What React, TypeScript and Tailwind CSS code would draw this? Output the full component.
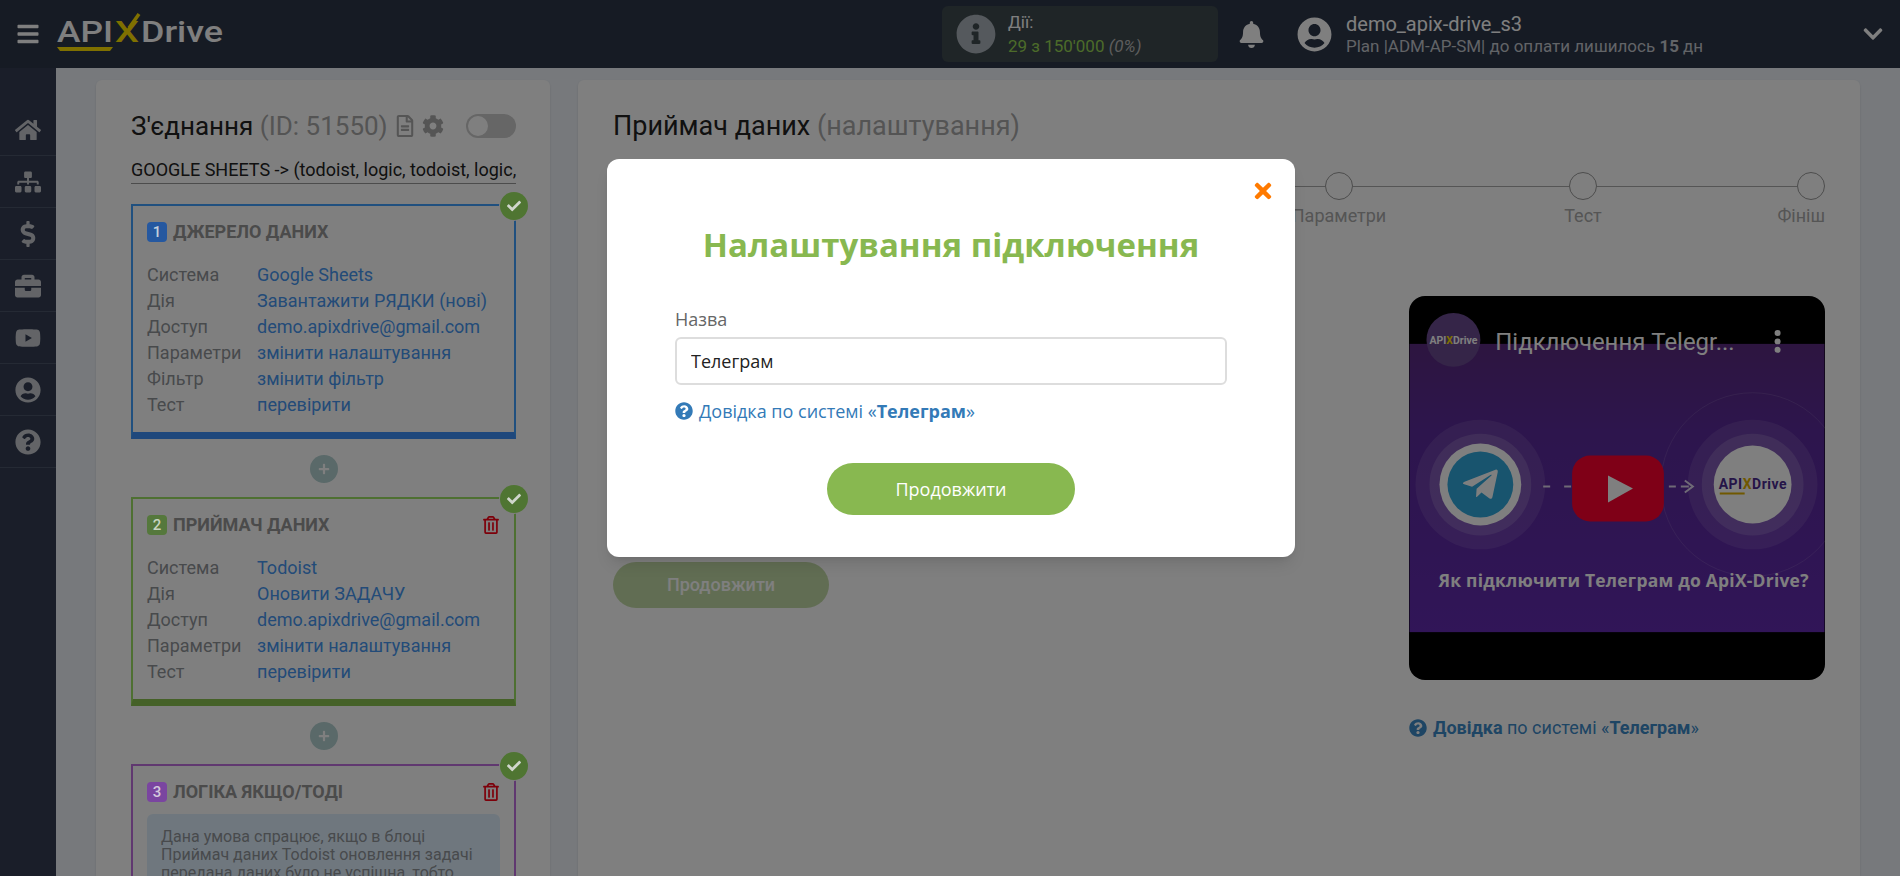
import React from "react";
import {
  FaBars, FaBell, FaBriefcase, FaCheck, FaChevronDown, FaCog, FaDollarSign, FaHome, FaInfoCircle,
  FaPlus, FaQuestionCircle, FaRegFileAlt, FaRegTrashAlt, FaSitemap, FaTelegramPlane, FaTimes, FaUserCircle, FaYoutube,
} from "react-icons/fa";

const roboto = { fontFamily: "Roboto, sans-serif" };
const openSans = { fontFamily: '"Open Sans", sans-serif' };

function Logo() {
  return (
    <svg width="172" height="46" viewBox="0 0 172 46" className="ml-4 shrink-0">
      <text x="1" y="31" fontFamily="Roboto, sans-serif" fontWeight="500" fontSize="29" fill="#fff" textLength="56" lengthAdjust="spacingAndGlyphs">API</text>
      <text x="59" y="31" fontFamily="Roboto, sans-serif" fontWeight="500" fontSize="29" fill="#ffe000" textLength="24" lengthAdjust="spacingAndGlyphs">X</text>
      <path d="M73 17 L83 3" stroke="#ffe000" strokeWidth="3.5" fill="none" />
      <text x="85" y="31" fontFamily="Roboto, sans-serif" fontWeight="500" fontSize="29" fill="#fff" textLength="82" lengthAdjust="spacingAndGlyphs">Drive</text>
      <path d="M1 36 H57 L54 40 H4 Z" fill="#ffe000" />
    </svg>
  );
}

function Header() {
  return (
    <header className="flex h-17 shrink-0 items-center bg-[#2c3648] text-white" style={roboto}>
      <div className="flex w-[942px] shrink-0 items-center">
        <FaBars className="ml-4 text-2xl text-white" />
        <Logo />
      </div>
      <div className="flex h-14 w-69 items-center rounded-md bg-[#3e4a4e] pl-3.5">
        <FaInfoCircle className="text-[40px] text-[#aab2ba]" />
        <div className="ml-3 text-[17px] leading-6">
          <div>Дії:</div>
          <div className="text-[#98d654]">
            29 з 150'000 <span className="italic text-[#bbbbbb]">(0%)</span>
          </div>
        </div>
      </div>
      <FaBell className="ml-5 text-[27px] text-white" />
      <FaUserCircle className="ml-8 text-[35px] text-white" />
      <div className="ml-3.5 flex-1">
        <div className="text-xl leading-6">demo_apix-drive_s3</div>
        <div className="text-[17px] leading-5 text-[#c4c8cf]">
          Plan |ADM-AP-SM| до оплати лишилось <b>15</b> дн
        </div>
      </div>
      <FaChevronDown className="mr-4 text-[22px]" />
    </header>
  );
}

function Sidebar() {
  const items = [FaHome, FaSitemap, FaDollarSign, FaBriefcase, FaYoutube, FaUserCircle, FaQuestionCircle];
  return (
    <aside className="w-14 shrink-0 bg-[#343d52] pt-9">
      {items.map((Icon, i) => (
        <div key={i} className="flex h-13 items-center justify-center border-b border-[#4a5468] text-[26px] text-[#c6c9cf]">
          <Icon />
        </div>
      ))}
    </aside>
  );
}

const colors = {
  blue: { border: "border-[#40a0ff]", bar: "border-b-[#3f90f8]", badge: "bg-[#2558a0] text-[#c4d0dc]" },
  green: { border: "border-[#9ce064]", bar: "border-b-[#8ac250]", badge: "bg-[#55783c] text-[#c8d4c0]" },
  purple: { border: "border-[#c070e0]", bar: "border-b-[#c070e0]", badge: "bg-[#7a45a0] text-[#d4c8dc]" },
};

function Card(props: {
  n: number;
  title: string;
  color: "blue" | "green" | "purple";
  trash?: boolean;
  rows?: [string, string][];
  children?: React.ReactNode;
}) {
  const c = colors[props.color];
  return (
    <div className={`relative border-2 border-b-[7px] ${c.border} ${c.bar} px-3.5 pb-3.5 pt-4`}>
      <div className="absolute -right-3.5 -top-3.5 z-10 flex h-7 w-7 items-center justify-center rounded-full bg-[#4f7532] text-sm text-[#d0d6cc] ring-1 ring-[#808080]">
        <FaCheck />
      </div>
      <div className="flex h-5 items-center justify-between">
        <div className="flex items-center">
          <span className={`relative z-10 flex h-5 w-5 items-center justify-center rounded-sm text-[15px] font-medium ${c.badge}`}>{props.n}</span>
          <span className="ml-1.5 text-lg font-bold uppercase text-[#969696]">{props.title}</span>
        </div>
        {props.trash && <FaRegTrashAlt className="text-lg text-[#fa0014]" />}
      </div>
      {props.rows && (
        <div className="mt-5 text-lg leading-6.5">
          {props.rows.map(([k, v]) => (
            <div key={k} className="flex">
              <span className="w-27.5 shrink-0 text-[#909499]">{k}</span>
              <span className="text-[#4696f0]">{v}</span>
            </div>
          ))}
        </div>
      )}
      {props.children}
    </div>
  );
}

function PlusButton() {
  return (
    <div className="mb-3.5 mt-4 flex justify-center">
      <div className="flex h-7 w-7 items-center justify-center rounded-full bg-[#b4d2d2] text-xs text-white">
        <FaPlus />
      </div>
    </div>
  );
}

function LeftPanel() {
  return (
    <section className="w-[454px] shrink-0 rounded-t-md bg-white pl-[35px] pr-8.5 pt-8 shadow-sm">
      <div className="flex h-7 items-center">
        <span className="text-[26px] text-[#222222]">
          З'єднання <span className="text-[#a8a8a8]">(ID: 51550)</span>
        </span>
        <FaRegFileAlt className="ml-1.5 text-[22px] text-[#aaaaaa]" />
        <FaCog className="ml-1.5 text-[22px] text-[#aaaaaa]" />
        <div className="ml-auto flex h-6 w-12.5 items-center rounded-full bg-[#cccccc] pl-0.5">
          <div className="h-5 w-5 rounded-full bg-white" />
        </div>
      </div>
      <div className="mt-4 h-7 whitespace-nowrap border-b border-[#999999] text-lg leading-7 text-[#222222]">
        GOOGLE SHEETS -&gt; (todoist, logic, todoist, logic,
      </div>
      <div className="mt-5">
        <Card
          n={1}
          title="Джерело даних"
          color="blue"
          rows={[
            ["Система", "Google Sheets"],
            ["Дія", "Завантажити РЯДКИ (нові)"],
            ["Доступ", "demo.apixdrive@gmail.com"],
            ["Параметри", "змінити налаштування"],
            ["Фільтр", "змінити фільтр"],
            ["Тест", "перевірити"],
          ]}
        />
        <PlusButton />
        <Card
          n={2}
          title="Приймач даних"
          color="green"
          trash
          rows={[
            ["Система", "Todoist"],
            ["Дія", "Оновити ЗАДАЧУ"],
            ["Доступ", "demo.apixdrive@gmail.com"],
            ["Параметри", "змінити налаштування"],
            ["Тест", "перевірити"],
          ]}
        />
        <PlusButton />
        <Card n={3} title="Логіка якщо/тоді" color="purple" trash>
          <div className="mt-3 rounded-md bg-[#deeffd] px-3.5 pb-3 pt-3.5 text-base leading-4.5 text-[#909499]">
            Дана умова спрацює, якщо в блоці
            <br />
            Приймач даних Todoist оновлення задачі
            <br />
            передана даних було не успішна, тобто
          </div>
        </Card>
      </div>
    </section>
  );
}

function Step(props: { label: string; end?: boolean }) {
  return (
    <div className={`flex w-7 flex-col ${props.end ? "items-end" : "items-center"}`}>
      <div className="h-7 w-7 rounded-full border border-[#999999] bg-white" />
      <span className="mt-1 whitespace-nowrap text-lg leading-6 text-[#aaaaaa]">{props.label}</span>
    </div>
  );
}

function Segment({ className }: { className: string }) {
  return <div className={`mt-3.5 h-px bg-[#aaaaaa] ${className}`} />;
}

function Thumbnail() {
  return (
    <svg viewBox="0 0 416 385" className="block h-96 w-104 overflow-hidden rounded-2xl bg-black">
      <defs>
        <linearGradient id="band" x1="0" y1="0" x2="0" y2="1">
          <stop offset="0" stopColor="#5a2a80" />
          <stop offset="0.3" stopColor="#5a2a9a" />
          <stop offset="1" stopColor="#622ab0" />
        </linearGradient>
      </defs>
      <rect x="0" y="48" width="416" height="289" fill="url(#band)" />
      <circle cx="344" cy="189" r="92" fill="none" stroke="#ffffff" strokeOpacity="0.12" />
      <circle cx="71" cy="189" r="65" fill="#ffffff" fillOpacity="0.1" />
      <circle cx="71" cy="189" r="51" fill="#ffffff" fillOpacity="0.15" />
      <circle cx="71" cy="189" r="41" fill="#ffffff" />
      <circle cx="71" cy="189" r="33" fill="#30a8dc" />
      <foreignObject x="47" y="165" width="48" height="48">
        <div className="flex h-12 w-12 items-center justify-center text-[40px] text-white">
          <FaTelegramPlane />
        </div>
      </foreignObject>
      <circle cx="344" cy="189" r="65" fill="#ffffff" fillOpacity="0.1" />
      <circle cx="344" cy="189" r="51" fill="#ffffff" fillOpacity="0.15" />
      <circle cx="344" cy="189" r="39" fill="#ffffff" />
      <text x="310" y="194" fontFamily="Roboto, sans-serif" fontWeight="700" fontSize="14" fill="#4a2a90" textLength="68">
        API<tspan fill="#e0b000">X</tspan>Drive
      </text>
      <path d="M311 198 H336" stroke="#e0b000" strokeWidth="2" />
      <path d="M134 191 H141 M155 191 H162 M260 191 H267 M272 191 H280" stroke="#ffffff" strokeOpacity="0.8" strokeWidth="2" />
      <path d="M276 185 L284 191 L276 197" stroke="#ffffff" strokeOpacity="0.8" strokeWidth="2" fill="none" />
      <rect x="163" y="160" width="92" height="66" rx="18" fill="#ff002e" />
      <path d="M199 180 L224 193 L199 207 Z" fill="#ffffff" />
      <text x="29" y="292" fontFamily="Open Sans, sans-serif" fontWeight="700" fontSize="17.5" fill="#ffffff" textLength="371">
        Як підключити Телеграм до ApiX-Drive?
      </text>
      <circle cx="44" cy="44" r="27" fill="#6a4a90" />
      <text x="44" y="48" textAnchor="middle" fontFamily="Roboto, sans-serif" fontWeight="700" fontSize="10.5" fill="#ffffff">
        API<tspan fill="#ffe000">X</tspan>Drive
      </text>
      <text x="86" y="54" fontFamily="Roboto, sans-serif" fontSize="24" fill="#ffffff">Підключення Telegr...</text>
      <circle cx="369" cy="37" r="3" fill="#ffffff" />
      <circle cx="369" cy="45.5" r="3" fill="#ffffff" />
      <circle cx="369" cy="54" r="3" fill="#ffffff" />
    </svg>
  );
}

function RightPanel() {
  return (
    <section className="flex-1 rounded-t-md bg-white px-[35px] pt-8 shadow-sm">
      <div className="h-7 text-[27px] leading-7 text-[#222222]">
        Приймач даних <span className="text-[#a8a8a8]">(налаштування)</span>
      </div>
      <div className="mt-8 flex items-start">
        <Segment className="flex-1" />
        <Step label="Параметри" />
        <Segment className="w-54" />
        <Step label="Тест" />
        <Segment className="w-50" />
        <Step label="Фініш" end />
      </div>
      <div className="mt-17 flex items-start justify-between">
        <button className="mt-66.5 h-11.5 w-54 rounded-full bg-[#88b850] text-lg font-medium text-white opacity-50">
          Продовжити
        </button>
        <div className="w-104">
          <Thumbnail />
          <div className="mt-9 flex items-center text-lg leading-6 text-[#3c8ac8]">
            <FaQuestionCircle className="mr-1.5 text-lg" />
            <span>
              <b>Довідка</b> по системі «<b>Телеграм</b>»
            </span>
          </div>
        </div>
      </div>
    </section>
  );
}

function Modal() {
  return (
    <div className="absolute inset-0 flex items-start justify-center bg-black/50 pl-0.5 pt-[159px]">
      <div className="relative z-20 w-172 rounded-xl bg-white px-17 pb-10.5 pt-16 shadow-lg" style={openSans}>
        <FaTimes className="absolute right-5 top-5 text-2xl text-[#ff7a00]" />
        <h2 className="text-center text-[33px] font-bold leading-11 text-[#88b850]">Налаштування підключення</h2>
        <label className="mt-10 block text-lg leading-6 text-[#666666]">Назва</label>
        <input
          readOnly
          value="Телеграм"
          className="mt-1.5 block h-12 w-full rounded-md border-2 border-[#dddddd] px-3.5 text-lg text-[#222222] outline-none"
        />
        <div className="mt-3.5 flex h-6 items-center text-lg text-[#337ab7]">
          <FaQuestionCircle className="mr-1.5 text-lg" />
          <span>
            Довідка по системі «<b>Телеграм</b>»
          </span>
        </div>
        <button className="mx-auto mt-10 block h-13 w-62 rounded-full bg-[#88b850] text-lg text-white">
          Продовжити
        </button>
      </div>
    </div>
  );
}

export default function App() {
  return (
    <div className="relative flex h-screen flex-col overflow-hidden bg-[#eff3f9]" style={roboto}>
      <Header />
      <div className="flex min-h-0 flex-1">
        <Sidebar />
        <main className="flex min-w-0 flex-1 gap-7 pl-10 pr-10 pt-3">
          <LeftPanel />
          <RightPanel />
        </main>
      </div>
      <Modal />
    </div>
  );
}
